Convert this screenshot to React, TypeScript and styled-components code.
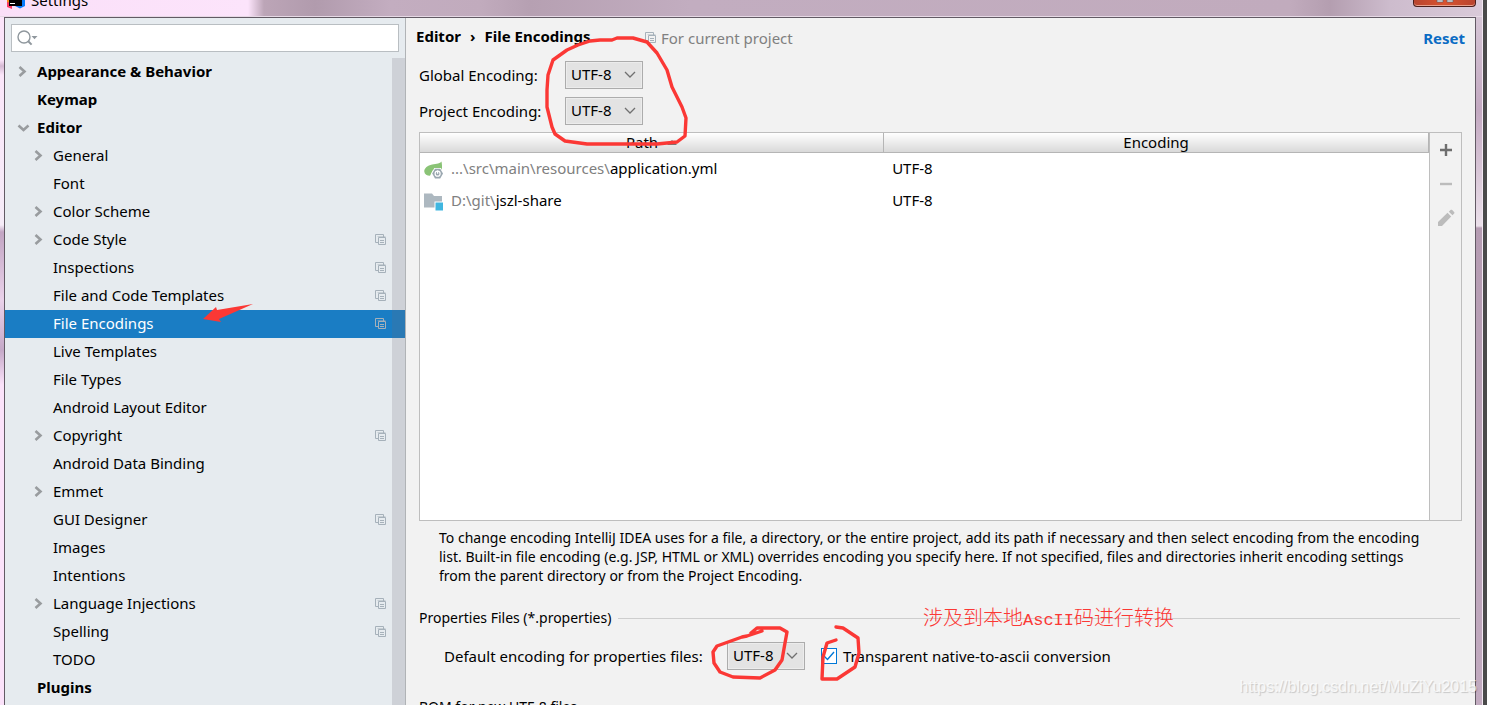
import React from 'react';
import styled, { createGlobalStyle, css } from 'styled-components';

const RED = '#fb3835';

const GlobalStyle = createGlobalStyle`
  * { box-sizing: border-box; }
  body {
    margin: 0;
    overflow: hidden;
    background: #4a4a4a;
    color: #000;
    font: 15px/20px 'Noto Sans', 'Noto Sans CJK SC', sans-serif;
  }
  button, input, select { font: inherit; color: inherit; }
`;

const Glass = styled.div`
  position: relative;
  height: 100vh;
  overflow: hidden;
  display: flex;
  flex-direction: column;
  margin-right: 4px;
  padding: 0 6px 0 4px;
  border-right: 1px solid #f2e8f2;
  background:
    linear-gradient(180deg, #d9cbd9 0, #c3a9c1 110px, #ebe0ea 226px, #b59cb2 228px, #c2abc0 100%) right / 6px 100% no-repeat,
    linear-gradient(180deg, #fbe4fa 0 60px, #d5b9d3 66px, #fbe6fa 75px, #f6ecf8 225px, #c2a5c3 232px, #ead2ea 300px, #c5a9c8 350px, #fbe2fa 385px 100%) left / 4px 100% no-repeat,
    #c3acbf;
`;

const TitleBar = styled.header`
  flex: none;
  display: flex;
  align-items: flex-start;
  justify-content: space-between;
  height: 17px;
  margin: 0 -6px 0 -4px;
  padding: 0 6px 0 7px;
  border-bottom: 1px solid #e6d9e5;
  background: linear-gradient(90deg, #fadff8 0, #fce4fb 248px, #bca5b7 264px, #b19bad 315px, #c3adc0 390px, #c1abbd 480px, #b6a0b2 530px, #c2adc0 690px, #c1abbd 1290px, #b49eb0 1330px, #cdbccd 1390px, #d9cad9 100%);
`;

const AppTitle = styled.div`
  display: flex;
  gap: 6px;
  line-height: 20px;
  span { margin-top: -10px; }
`;

const CloseButton = styled.button`
  width: 63px;
  height: 7px;
  padding: 0;
  display: flex;
  justify-content: center;
  border: 1px solid #4b1f1b;
  border-top: 0;
  border-radius: 0 0 4px 4px;
  background: linear-gradient(90deg, #b8452f, #d9532f 50%, #b8452f);
  box-shadow: inset 0 -1px #e8a08c;
`;

const Window = styled.div`
  flex: 1;
  display: flex;
  min-height: 0;
  border: solid #625a64;
  border-width: 1px 1px 0 1px;
  background: #f2f2f2;
`;

const Sidebar = styled.aside`
  flex: none;
  display: flex;
  flex-direction: column;
  width: 401px;
  border-right: 1px solid #b0b3b6;
  background: #e6ebef;
`;

const SearchBox = styled.label`
  flex: none;
  display: flex;
  align-items: center;
  height: 28px;
  margin: 6px 6px 6px;
  padding: 0 5px;
  border: 1px solid #b9bec2;
  background: #fff;
  input {
    flex: 1;
    min-width: 0;
    border: 0;
    outline: 0;
    background: transparent;
  }
`;

const TreeArea = styled.nav`
  position: relative;
  flex: 1;
  min-height: 0;
  overflow: hidden;
`;

const ScrollThumb = styled.div`
  position: absolute;
  top: 0;
  right: 0;
  bottom: 0;
  width: 13px;
  background: rgba(108, 104, 118, 0.2);
`;

const Tree = styled.ul`
  margin: 0;
  padding: 0;
  list-style: none;
`;

const TreeRow = styled.button<{ $depth: number; $selected?: boolean }>`
  display: flex;
  align-items: center;
  width: 100%;
  height: 28px;
  padding: 0 18px 0 ${(p) => (p.$depth ? 28 : 12)}px;
  border: 0;
  text-align: left;
  background: transparent;
  font-weight: ${(p) => (p.$depth ? 400 : 700)};
  ${(p) => p.$selected && css`
    background: #1a7dc4;
    color: #fff;
  `}
`;

const Toggle = styled.span`
  flex: none;
  display: flex;
  width: 20px;
`;

const RowLabel = styled.span`
  flex: 1;
  padding-bottom: 2px;
  white-space: nowrap;
`;

const Main = styled.main`
  flex: 1;
  min-width: 0;
  padding: 0 13px;
`;

const Heading = styled.div`
  display: flex;
  align-items: center;
  height: 43px;
  margin-left: -3px;
  margin-right: -3px;
  padding-bottom: 4px;
`;

const Crumbs = styled.h1`
  display: flex;
  gap: 9px;
  width: 229px;
  margin: 0;
  padding-bottom: 4px;
  font-size: 15px;
  line-height: 20px;
  white-space: nowrap;
`;

const ScopeNote = styled.span`
  flex: 1;
  display: flex;
  align-items: center;
  gap: 4px;
  color: #808080;
`;

const ResetLink = styled.a`
  color: #0b6cc4;
  font-weight: 700;
  text-decoration: none;
`;

const EncodingForm = styled.div`
  display: grid;
  grid-template-columns: 146px auto;
  justify-content: start;
  align-items: center;
  row-gap: 8px;
  margin-bottom: 7px;
`;

const SelectWrap = styled.span`
  position: relative;
  display: inline-flex;
  select {
    appearance: none;
    width: 78px;
    height: 28px;
    padding: 0 5px 2px;
    border: 1px solid #acacac;
    border-radius: 0;
    background: #e3e3e3;
    box-shadow: inset 0 0 0 1px #ececec;
  }
  svg {
    position: absolute;
    right: 7px;
    top: 10px;
    pointer-events: none;
  }
`;

const TablePanel = styled.section`
  display: flex;
  height: 389px;
  border: 1px solid #bebebe;
`;

const TableArea = styled.div`
  flex: 1;
  background: #fff;
`;

const Table = styled.table`
  width: 100%;
  border-collapse: separate;
  border-spacing: 0;
  table-layout: fixed;
  th {
    height: 20px;
    padding: 0;
    border-right: 1px solid #b5b5b5;
    border-bottom: 1px solid #b5b5b5;
    background: linear-gradient(#fff, #d9d9d9);
    font-weight: 400;
    line-height: 19px;
  }
  th:first-child { width: 46%; }
  td {
    height: 32px;
    padding: 0 8px 2px;
  }
  td:first-child { padding: 0 4px; }
`;

const HeadText = styled.span`
  display: inline-flex;
  align-items: center;
  gap: 9px;
`;

const PathCell = styled.div`
  display: flex;
  align-items: center;
  gap: 7px;
`;

const PathText = styled.span`
  padding-bottom: 2px;
`;

const Muted = styled.span`
  color: #808080;
`;

const Actions = styled.div`
  display: flex;
  flex-direction: column;
  align-items: center;
  width: 32px;
  border-left: 1px solid #bebebe;
`;

const ActionButton = styled.button`
  display: flex;
  align-items: center;
  justify-content: center;
  width: 30px;
  height: 34px;
  padding: 0;
  border: 0;
  background: transparent;
`;

const Hint = styled.p`
  margin: 7px 0 23px;
  padding: 0 24px 0 20px;
  font-size: 14px;
  line-height: 19px;
`;

const GroupTitle = styled.h2`
  display: flex;
  align-items: center;
  gap: 7px;
  margin: 0 2px 14px 0;
  font-size: 14px;
  font-weight: 400;
  line-height: 20px;
  &::after {
    content: '';
    flex: 1;
    border-top: 1px solid #cecece;
  }
`;

const PropertiesRow = styled.div`
  display: flex;
  align-items: center;
  padding-left: 25px;
  margin-bottom: 27px;
  > label:first-child { width: 283px; white-space: nowrap; }
`;

const CheckLabel = styled.label`
  display: flex;
  align-items: center;
  gap: 6px;
  margin-left: 16px;
  input {
    appearance: none;
    width: 16px;
    height: 16px;
    margin: 0;
    border: 1px solid #0078d7;
    background: #fff;
  }
`;

const CheckBox = styled.span`
  position: relative;
  display: flex;
  svg {
    position: absolute;
    inset: 0;
    pointer-events: none;
  }
`;

const Markup = styled.svg`
  position: absolute;
  top: 0;
  left: 0;
  pointer-events: none;
`;

const Note = styled.div`
  position: absolute;
  top: 605px;
  left: 923px;
  color: ${RED};
  font-family: 'Noto Sans CJK SC', sans-serif;
  font-size: 20px;
  font-weight: 300;
  line-height: 24px;
  white-space: nowrap;
  span {
    font-family: 'Liberation Mono', monospace;
    font-size: 17px;
  }
`;

const Watermark = styled.div`
  position: absolute;
  right: 5px;
  bottom: 7px;
  color: rgba(255, 255, 255, 0.75);
  font: 16px/22px 'Liberation Sans', sans-serif;
  text-shadow: 1px 1px 1px rgba(0, 0, 0, 0.18);
`;

const ProjectIcon = () => (
  <svg width="12" height="12" viewBox="0 0 12 12" fill="none" stroke="#a6b1ba" aria-hidden="true">
    <path d="M3 8.5H.5V.5h8V3" />
    <path d="M2.500 2.500h8" opacity=".5" />
    <path d="M3.500 3.500h7v7h-7z" />
    <path d="M5 6.500h4M5 8.500h4" />
  </svg>
);

const Chevron = ({ open }: { open?: boolean }) => (
  <svg width="13" height="12" viewBox="0 0 13 12" fill="none" stroke="#999c9f" strokeWidth="2.6" aria-hidden="true">
    <path d={open ? 'M1.5 3.500l5 4.500L11.500 3.500' : 'M2.500 1L7.500 5.500l-5 4.500'} />
  </svg>
);

const SearchIcon = () => (
  <svg width="21" height="18" viewBox="0 0 21 18" fill="none" stroke="#8f979d" aria-hidden="true">
    <circle cx="7" cy="8" r="6" strokeWidth="1.4" />
    <path d="M11.2 12.2l3.4 3.4" strokeWidth="2" />
    <path d="M14.5 7h6l-3 3.2z" fill="#8f979d" stroke="none" />
  </svg>
);

const LogoIcon = () => (
  <svg width="18" height="9" viewBox="0 0 18 9" aria-hidden="true">
    <path d="M0 0h5v9L0 7z" fill="#fc3b67" />
    <path d="M0 0h4v3L0 2z" fill="#f98a1d" />
    <path d="M11 0h7v6l-5 2.5L8 6z" fill="#087cfa" />
    <path d="M2 0h13v6H2z" fill="#000" />
    <path d="M3 3h5v1H3z" fill="#fff" />
  </svg>
);

const YamlIcon = () => (
  <svg width="20" height="20" viewBox="0 0 20 20" aria-hidden="true">
    <path d="M17.500 2.500C15 5.500 11 4.500 6.500 6 2 7.500 0 10.200.3 12.700.6 15.500 3 16.500 6 16.700L9 11h8.800c.5-3 .2-6-.3-8.500z" fill="#8ac376" />
    <path d="M10.300 9h6.600l3.100 5.500-3.100 5.500h-6.600l-3.100-5.500z" fill="#fff" />
    <path d="M11 9.700h5.200l2.800 4.800-2.800 4.900H11l-2.800-4.900z" fill="#9aa7b0" />
    <circle cx="13.600" cy="14.700" r="2.500" fill="none" stroke="#fff" strokeWidth="1.200" />
    <path d="M13.600 11.500v3.200" stroke="#fff" strokeWidth="1.200" />
  </svg>
);

const ModuleIcon = () => (
  <svg width="20" height="20" viewBox="0 0 20 20" aria-hidden="true">
    <path d="M0 2.500h8L10 5h8v5.500h-7.500v6H0z" fill="#adb8c0" />
    <path d="M11.500 11.500H19v8h-7.500z" fill="#40b6e0" />
  </svg>
);

const TREE: { label: string; depth: number; arrow?: 'open' | 'closed'; project?: boolean }[] = [
  { label: 'Appearance & Behavior', depth: 0, arrow: 'closed' },
  { label: 'Keymap', depth: 0 },
  { label: 'Editor', depth: 0, arrow: 'open' },
  { label: 'General', depth: 1, arrow: 'closed' },
  { label: 'Font', depth: 1 },
  { label: 'Color Scheme', depth: 1, arrow: 'closed' },
  { label: 'Code Style', depth: 1, arrow: 'closed', project: true },
  { label: 'Inspections', depth: 1, project: true },
  { label: 'File and Code Templates', depth: 1, project: true },
  { label: 'File Encodings', depth: 1, project: true },
  { label: 'Live Templates', depth: 1 },
  { label: 'File Types', depth: 1 },
  { label: 'Android Layout Editor', depth: 1 },
  { label: 'Copyright', depth: 1, arrow: 'closed', project: true },
  { label: 'Android Data Binding', depth: 1 },
  { label: 'Emmet', depth: 1, arrow: 'closed' },
  { label: 'GUI Designer', depth: 1, project: true },
  { label: 'Images', depth: 1 },
  { label: 'Intentions', depth: 1 },
  { label: 'Language Injections', depth: 1, arrow: 'closed', project: true },
  { label: 'Spelling', depth: 1, project: true },
  { label: 'TODO', depth: 1 },
  { label: 'Plugins', depth: 0 },
];

const FILES = [
  { icon: <YamlIcon />, dir: '...\\src\\main\\resources\\', name: 'application.yml', encoding: 'UTF-8' },
  { icon: <ModuleIcon />, dir: 'D:\\git\\', name: 'jszl-share', encoding: 'UTF-8' },
];

const EncodingSelect = ({ id }: { id: string }) => (
  <SelectWrap>
    <select id={id} defaultValue="UTF-8">
      <option>UTF-8</option>
      <option>GBK</option>
      <option>ISO-8859-1</option>
    </select>
    <svg width="12" height="8" viewBox="0 0 12 8" fill="none" stroke="#707070" strokeWidth="1.3" aria-hidden="true">
      <path d="M1 1l5 5 5-5" />
    </svg>
  </SelectWrap>
);

export default function App() {
  return (
    <>
      <GlobalStyle />
      <Glass>
        <TitleBar>
          <AppTitle>
            <LogoIcon />
            <span>Settings</span>
          </AppTitle>
          <CloseButton aria-label="Close">
            <svg width="18" height="3" viewBox="0 0 18 3" aria-hidden="true">
              <path d="M1 0h6v2H1zM11 0h6v2h-6z" fill="#e6e6e6" stroke="#555d69" strokeWidth=".6" />
            </svg>
          </CloseButton>
        </TitleBar>
        <Window>
          <Sidebar>
            <SearchBox>
              <SearchIcon />
              <input type="text" aria-label="Search settings" />
            </SearchBox>
            <TreeArea>
              <Tree>
                {TREE.map((item) => (
                  <li key={item.label}>
                    <TreeRow $depth={item.depth} $selected={item.label === 'File Encodings'}>
                      <Toggle>{item.arrow && <Chevron open={item.arrow === 'open'} />}</Toggle>
                      <RowLabel>{item.label}</RowLabel>
                      {item.project && <ProjectIcon />}
                    </TreeRow>
                  </li>
                ))}
              </Tree>
              <ScrollThumb />
            </TreeArea>
          </Sidebar>
          <Main>
            <Heading>
              <Crumbs>
                <span>Editor</span>
                <span>›</span>
                <span>File Encodings</span>
              </Crumbs>
              <ScopeNote>
                <ProjectIcon />
                For current project
              </ScopeNote>
              <ResetLink href="#reset">Reset</ResetLink>
            </Heading>
            <EncodingForm>
              <label htmlFor="global">Global Encoding:</label>
              <EncodingSelect id="global" />
              <label htmlFor="project">Project Encoding:</label>
              <EncodingSelect id="project" />
            </EncodingForm>
            <TablePanel>
              <TableArea>
                <Table>
                  <thead>
                    <tr>
                      <th>
                        <HeadText>
                          Path
                          <svg width="10" height="6" viewBox="0 0 10 6" aria-hidden="true">
                            <path d="M5 0l5 5H0z" fill="#777" />
                          </svg>
                        </HeadText>
                      </th>
                      <th>Encoding</th>
                    </tr>
                  </thead>
                  <tbody>
                    {FILES.map((file) => (
                      <tr key={file.name}>
                        <td>
                          <PathCell>
                            {file.icon}
                            <PathText>
                              <Muted>{file.dir}</Muted>
                              {file.name}
                            </PathText>
                          </PathCell>
                        </td>
                        <td>{file.encoding}</td>
                      </tr>
                    ))}
                  </tbody>
                </Table>
              </TableArea>
              <Actions>
                <ActionButton aria-label="Add">
                  <svg width="14" height="14" viewBox="0 0 14 14" stroke="#6e6e6e" strokeWidth="2.4" aria-hidden="true">
                    <path d="M7 1v12M1 7h12" />
                  </svg>
                </ActionButton>
                <ActionButton aria-label="Remove">
                  <svg width="14" height="14" viewBox="0 0 14 14" stroke="#bcbcbc" strokeWidth="2.4" aria-hidden="true">
                    <path d="M1 7h12" />
                  </svg>
                </ActionButton>
                <ActionButton aria-label="Edit">
                  <svg width="18" height="18" viewBox="0 0 18 18" fill="#bcbcbc" aria-hidden="true">
                    <path d="M1 17v-4L10.500 3.800l3.700 3.700L5 17zM11.800 2.700L13.500 1c.5-.5 1.200-.5 1.700 0l1.900 1.900c.5.500.5 1.200 0 1.700l-1.600 1.700z" />
                  </svg>
                </ActionButton>
              </Actions>
            </TablePanel>
            <Hint>
              To change encoding IntelliJ IDEA uses for a file, a directory, or the entire project, add its path if
              necessary and then select encoding from the encoding list. Built-in file encoding (e.g. JSP, HTML or XML)
              overrides encoding you specify here. If not specified, files and directories inherit encoding settings
              from the parent directory or from the Project Encoding.
            </Hint>
            <GroupTitle>Properties Files (*.properties)</GroupTitle>
            <PropertiesRow>
              <label htmlFor="properties">Default encoding for properties files:</label>
              <EncodingSelect id="properties" />
              <CheckLabel>
                <CheckBox>
                  <input type="checkbox" defaultChecked />
                  <svg width="16" height="16" viewBox="0 0 16 16" fill="none" stroke="#0078d7" strokeWidth="1.400" aria-hidden="true">
                    <path d="M3 8l3.500 3.500L13 4" />
                  </svg>
                </CheckBox>
                Transparent native-to-ascii conversion
              </CheckLabel>
            </PropertiesRow>
            <GroupTitle>BOM for new UTF-8 files</GroupTitle>
          </Main>
        </Window>
        <Markup width="900" height="700" viewBox="0 0 900 700" fill="none" stroke={RED} strokeWidth="3.400" strokeLinecap="round" strokeLinejoin="round" aria-hidden="true">
          <path d="M203 319L216 307L217 310L253 304L219 319L221 322Z" fill={RED} stroke="none" />
          <path d="M612 40H600L590 41L578 45L567 50L553 60L548 75L547 90V107L552 127L555 134L565 141L587 144H657L677 142L685 136L686 118L682 107L672 87L667 70L657 53L647 42L633 38H617L612 40" />
          <path d="M762 631L747 636L742 637L717 646L713 652L714 663L720 672L733 677L760 678L775 670L782 660L785 643L787 632L780 628L757 628L751 633" />
          <path d="M836 627L843 628L858 638L859 653L855 667L837 679H822L823 657L827 643L836 640" />
        </Markup>
        <Note>
          涉及到本地<span>AscII</span>码进行转换
        </Note>
        <Watermark>https://blog.csdn.net/MuZiYu2015</Watermark>
      </Glass>
    </>
  );
}
